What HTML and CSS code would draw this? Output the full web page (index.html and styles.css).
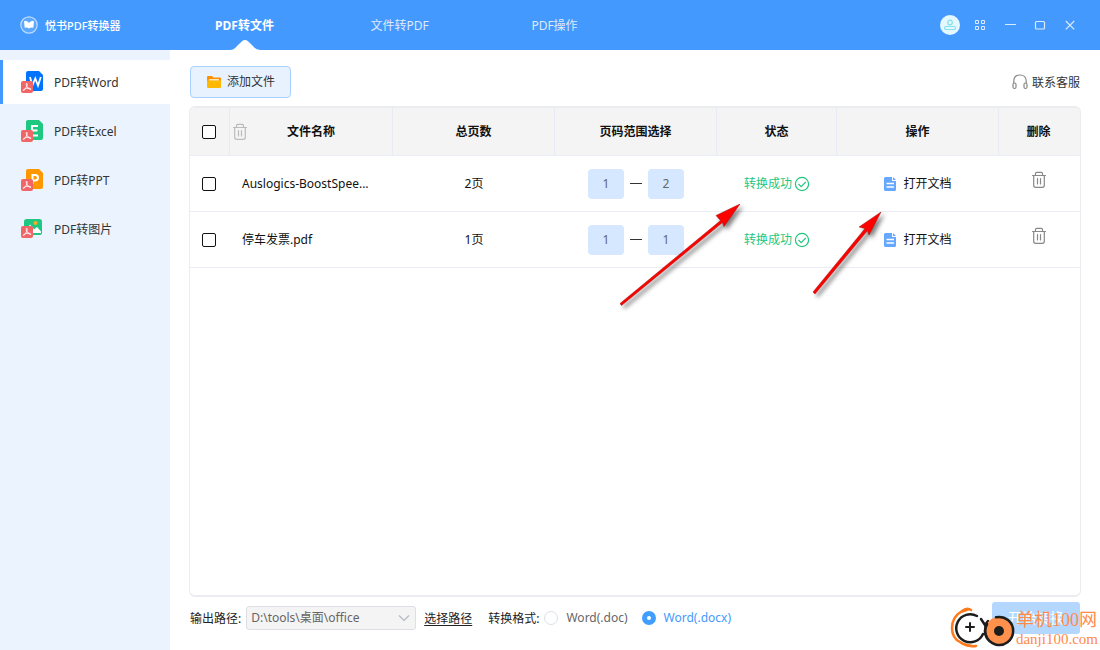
FILE: index.html
```html
<!DOCTYPE html>
<html lang="zh-CN">
<head>
<meta charset="utf-8">
<title>悦书PDF转换器</title>
<link rel="stylesheet" href="styles.css">
</head>
<body>
<svg class="defs" aria-hidden="true">
  <symbol id="badge" viewBox="0 0 12 12">
    <rect width="12" height="12" rx="2" fill="#f06565"/>
    <path d="M5.600 2.200C7 2.500 5.800 5.500 4.500 7.600C3.600 9 2.200 10 2.100 9.200C2.200 8.300 5 7.300 7.200 7.200C9 7.100 10.300 7.800 9.800 8.400C9 8.900 7 7.500 6 5.500C5.200 4 4.900 2.400 5.600 2.200Z" fill="none" stroke="#fff" stroke-width=".9"/>
  </symbol>
  <symbol id="trash" viewBox="0 0 16 18">
    <g fill="none" stroke="currentColor" stroke-width="1.2" stroke-linecap="round">
      <path d="M1.500 4.500h13M4.500 4V2.500Q4.500 1.300 5.700 1.300h4.600q1.200 0 1.200 1.200V4M2.700 4.800v9.500q0 2 2 2h6.600q2 0 2-2V4.800M6.500 7.500v5.500M9.500 7.500v5.500"/>
    </g>
  </symbol>
  <symbol id="check" viewBox="0 0 16 16">
    <g fill="none" stroke="#22c77e" stroke-width="1.200"><circle cx="8" cy="8" r="6.600"/><path d="M4.500 8l2.700 2.700 4.600-4.800"/></g>
  </symbol>
  <symbol id="doc" viewBox="0 0 12 14">
    <path d="M1.500 0H8v3.500q0 .5.500.5H12v8.500q0 1.500-1.500 1.500h-9Q0 14 0 12.500v-11Q0 0 1.500 0ZM9 0l3 3H9Z" fill="#64a9ff"/>
    <path d="M2.500 6.500h7.500M2.500 10h7.500" stroke="#fff" stroke-width="1.300"/>
  </symbol>
</svg>

<header class="topbar">
  <div class="brand">
    <svg class="brand-logo" viewBox="0 0 18 18"><circle cx="9" cy="9" r="8.200" fill="#5ca8ff" stroke="#bedcff" stroke-width="1.200"/><path d="M5.200 4.800Q8 5.300 9 7q1-1.700 3.800-2.200l1.200.7-.7 6.200Q10.500 11.300 9 12.500q-1.500-1.200-4.300-.8L4 5.500Z" fill="#fff"/></svg>
    <span>悦书PDF转换器</span>
  </div>
  <nav class="tabs">
    <a class="tab tab-active" href="#file">PDF转文件<svg class="tab-notch" viewBox="0 0 30 10"><path d="M0 10Q4 10 7 6L12 1.200Q15-1 18 1.200L23 6Q26 10 30 10Z" fill="#fff"/></svg></a>
    <a class="tab" href="#pdf">文件转PDF</a>
    <a class="tab" href="#ops">PDF操作</a>
  </nav>
  <div class="window-tools">
    <button class="tool avatar" aria-label="账户"><svg viewBox="0 0 20 20"><circle cx="10" cy="10" r="10" fill="#e4f8ff"/><g fill="none" stroke="#86e0e8" stroke-width="1.200"><circle cx="10" cy="7.500" r="2.300"/><rect x="4.500" y="11.500" width="11" height="3" rx="1.500"/></g></svg></button>
    <button class="tool" aria-label="菜单"><svg viewBox="0 0 20 20"><path d="M5.500 5.500h3v3h-3zM11.500 5.500h3v3h-3zM5.500 11.500h3v3h-3zM11.500 11.500h3v3h-3z" fill="none" stroke="#d9eaff"/></svg></button>
    <button class="tool" aria-label="最小化"><svg viewBox="0 0 20 20"><path d="M5 9.500h11" stroke="#d9eaff"/></svg></button>
    <button class="tool" aria-label="最大化"><svg viewBox="0 0 20 20"><rect x="5.500" y="6.500" width="9" height="7.500" rx="1" fill="none" stroke="#d9eaff" stroke-width="1.200"/></svg></button>
    <button class="tool" aria-label="关闭"><svg viewBox="0 0 20 20"><path d="M5.800 6l8.400 8.400M14.200 6l-8.400 8.400" stroke="#d9eaff" stroke-width="1.200"/></svg></button>
  </div>
</header>

<div class="body">
  <nav class="sidebar">
    <a class="side-item side-active" href="#word"><svg class="side-icon" viewBox="0 0 22 22"><path d="M7 0h11l4 4v14q0 2-2 2H7q-2 0-2-2V2q0-2 2-2Z" fill="#0073ff"/><path d="M9 6l2.300 8.500L14.300 7.500l2.700 7L19.800 6" fill="none" stroke="#fff" stroke-width="1.800"/><use href="#badge" y="10" width="12" height="12"/></svg><span>PDF转Word</span></a>
    <a class="side-item" href="#excel"><svg class="side-icon" viewBox="0 0 22 22"><path d="M7 0h11l4 4v14q0 2-2 2H7q-2 0-2-2V2q0-2 2-2Z" fill="#1fc881"/><path d="M17 6h-6v9.500h6M11 10.500h5.500" fill="none" stroke="#fff" stroke-width="2"/><use href="#badge" y="10" width="12" height="12"/></svg><span>PDF转Excel</span></a>
    <a class="side-item" href="#ppt"><svg class="side-icon" viewBox="0 0 22 22"><path d="M7 0h11l4 4v14q0 2-2 2H7q-2 0-2-2V2q0-2 2-2Z" fill="#ff9800"/><path d="M11.500 15V6H14q3 0 3 2.700t-3 2.700h-2" fill="none" stroke="#fff" stroke-width="2"/><use href="#badge" y="10" width="12" height="12"/></svg><span>PDF转PPT</span></a>
    <a class="side-item" href="#image"><svg class="side-icon" viewBox="0 0 22 22"><rect x="3" y="1" width="18" height="16" rx="2.500" fill="#1fc881"/><circle cx="14.500" cy="5" r="2" fill="#ffa726"/><path d="M4.500 12L9 6.500l4 5 3-2.500 4 4.500V15H4.500Z" fill="#fff"/><use href="#badge" y="8" width="12" height="12"/></svg><span>PDF转图片</span></a>
  </nav>

  <main class="main">
    <div class="toolbar">
      <button class="add-btn"><svg class="folder" viewBox="0 0 16 14"><path d="M1 3V2q0-1 1-1h4l1.500 1.500H14q1 0 1 1V6H1Z" fill="#ff9100"/><path d="M3 4h10v3H3Z" fill="#ffe6b0"/><path d="M1 5.500h14V12q0 1-1 1H2q-1 0-1-1Z" fill="#ffb800"/></svg>添加文件</button>
      <a class="service" href="#service"><svg class="headset" viewBox="0 0 16 16"><g fill="none" stroke="#888" stroke-width="1.200"><path d="M1.800 9V7Q2 1 8 1t6.200 6v2"/><rect x="1" y="9" width="3" height="5.500" rx="1.500"/><rect x="12" y="9" width="3" height="5.500" rx="1.500"/></g></svg><span>联系客服</span></a>
    </div>

    <section class="panel">
      <table class="files">
        <colgroup><col class="col-check"><col class="col-name"><col><col><col class="col-status"><col><col class="col-delete"></colgroup>
        <thead>
          <tr>
            <th><input class="check" type="checkbox" aria-label="全选"></th>
            <th class="name-head"><div class="name-grid"><button class="trash-btn muted" aria-label="清空"><svg class="trash"><use href="#trash"/></svg></button><span>文件名称</span></div></th>
            <th>总页数</th><th>页码范围选择</th><th>状态</th><th>操作</th><th>删除</th>
          </tr>
        </thead>
        <tbody>
          <tr>
            <td><input class="check" type="checkbox" aria-label="选择 Auslogics-BoostSpee..."></td>
            <td class="name">Auslogics-BoostSpee...</td>
            <td>2页</td>
            <td><div class="range"><input class="page" type="text" value="1" aria-label="起始页"><span class="dash"></span><input class="page" type="text" value="2" aria-label="结束页"></div></td>
            <td><div class="status">转换成功<svg class="ok"><use href="#check"/></svg></div></td>
            <td><button class="open"><svg class="doc"><use href="#doc"/></svg>打开文档</button></td>
            <td class="delete"><button class="trash-btn" aria-label="删除"><svg class="trash"><use href="#trash"/></svg></button></td>
          </tr>
          <tr>
            <td><input class="check" type="checkbox" aria-label="选择 停车发票.pdf"></td>
            <td class="name">停车发票.pdf</td>
            <td>1页</td>
            <td><div class="range"><input class="page" type="text" value="1" aria-label="起始页"><span class="dash"></span><input class="page" type="text" value="1" aria-label="结束页"></div></td>
            <td><div class="status">转换成功<svg class="ok"><use href="#check"/></svg></div></td>
            <td><button class="open"><svg class="doc"><use href="#doc"/></svg>打开文档</button></td>
            <td class="delete"><button class="trash-btn" aria-label="删除"><svg class="trash"><use href="#trash"/></svg></button></td>
          </tr>
        </tbody>
      </table>
    </section>

    <footer class="footer">
      <label class="path-label" for="path">输出路径:</label>
      <div class="select-wrap">
        <select id="path" class="path" disabled><option>D:\tools\桌面\office</option></select>
        <svg class="chevron" viewBox="0 0 12 8"><path d="M1 1.500l5 5 5-5" fill="none" stroke="#b4b8c0" stroke-width="1.200"/></svg>
      </div>
      <a class="choose" href="#choose">选择路径</a>
      <span class="format-label">转换格式:</span>
      <label class="format"><input class="radio" type="radio" name="format">Word(.doc)</label>
      <label class="format format-on"><input class="radio" type="radio" name="format" checked>Word(.docx)</label>
      <button class="start" disabled>开始转换</button>
    </footer>
  </main>
</div>

<svg class="arrows" viewBox="0 0 270 110" aria-hidden="true">
  <g fill="#f00" stroke="#9c1010" stroke-width=".5">
    <path d="M0 99.500L100.500 16.500 96 11.500 120 0 104 22.500 102.500 18.500 1.500 101.500Z"/>
    <path d="M193 88L245 24.500 239 23 261 8 249 31 247.500 26.500 195 90Z"/>
  </g>
</svg>

<div class="watermark">
  <svg class="mark-logo" viewBox="0 0 66 44">
    <g fill="none" stroke-linecap="round">
      <path d="M21 4Q17 1 12 5Q2 11 2 22q0 10 8 14 7 5 16 4" stroke="#ff7a1a" stroke-width="2.500"/>
      <path d="M12 5Q17 0 20 4L12 7ZM10 36q8 8 17 4L14 37Z" fill="#ff7a1a"/>
      <circle cx="20" cy="22" r="14" fill="#fff"/>
      <path d="M27 10A14 14 0 1 0 33 28M31 13l4 6 3-4" stroke="#1d1d1d" stroke-width="2.500"/>
      <circle cx="49" cy="25" r="14" fill="#ff914d"/>
      <path d="M46 11.300A14 14 0 1 1 37 18" stroke="#1d1d1d" stroke-width="2.500"/>
      <path d="M37 18A14 14 0 0 0 37 32" stroke="#1d1d1d" stroke-width="2.500"/>
      <path d="M16 21h8M20 17v8" stroke="#1d1d1d" stroke-width="2"/>
    </g>
    <circle cx="49" cy="25" r="5" fill="#1d1d1d"/>
  </svg>
  <div class="mark-text"><span class="mark-name">单机100网</span><span class="mark-url">danji100.com</span></div>
</div>
</body>
</html>
```
FILE: styles.css
```css
* { box-sizing: border-box; }
body {
  margin: 0;
  min-height: 100vh;
  display: flex;
  flex-direction: column;
  position: relative;
  overflow: hidden;
  background: #fff;
  color: #222;
  font: 12px/16px "Noto Sans", "Noto Sans CJK SC", sans-serif;
}
a { color: inherit; text-decoration: none; }
button, input, select { font: inherit; color: inherit; margin: 0; }
button { border: 0; padding: 0; background: none; }
svg { display: block; flex: none; }
.defs { position: absolute; width: 0; height: 0; }

.topbar { display: flex; height: 50px; background: #4499ff; color: #fff; }
.brand { width: 167px; padding-left: 20px; display: flex; align-items: center; gap: 7px; font-size: 11px; font-weight: 500; }
.brand span { padding-top: 2px; }
.brand-logo { width: 18px; height: 18px; }
.tabs { display: flex; flex: 1; }
.tab { width: 155px; padding-top: 2px; display: flex; align-items: center; justify-content: center; position: relative; color: #dfeaf8; }
.tab-active { color: #fff; font-weight: 700; }
.tab-notch { position: absolute; bottom: 0; left: 50%; margin-left: -15px; width: 30px; height: 10px; }
.window-tools { display: flex; align-items: center; gap: 10px; padding-right: 20px; }
.tool, .tool svg { width: 20px; height: 20px; }

.body { flex: 1; display: flex; }
.sidebar { width: 170px; flex: none; background: #ebf3ff; padding-top: 10px; display: flex; flex-direction: column; gap: 5px; }
.side-item { height: 44px; display: flex; align-items: center; gap: 11px; padding-left: 18px; border-left: 3px solid transparent; color: #333; }
.side-item span { padding-top: 2px; }
.side-active { background: #fff; border-left-color: #4499ff; }
.side-icon { width: 22px; height: 22px; }

.main { flex: 1; min-width: 0; display: flex; flex-direction: column; padding: 16px 19px; }
.toolbar { display: flex; align-items: center; justify-content: space-between; padding: 0 1px; margin-bottom: 8px; }
.add-btn { height: 32px; padding: 0 15px; display: flex; align-items: center; gap: 5px; border: 1px solid #a9d0ff; border-radius: 4px; background: #e8f2ff; color: #333; }
.folder { width: 16px; height: 14px; }
.service { display: flex; align-items: center; gap: 4px; color: #333; }
.service span { padding-top: 2px; }
.headset { width: 16px; height: 16px; }

.panel { flex: 1; border: 1px solid #ebecf0; border-width: 2px 1px; border-radius: 6px; overflow: hidden; }
.files { width: 100%; table-layout: fixed; border-collapse: separate; border-spacing: 0; color: #111; }
.col-check { width: 40px; }
.col-name { width: 163px; }
.col-status { width: 120px; }
.col-delete { width: 81px; }
.files th, .files td { padding: 0; text-align: center; vertical-align: middle; border-bottom: 1px solid #ebedf5; }
.files th { height: 48px; background: #f4f4f4; border-right: 1px solid #e8ebf5; font-weight: 700; }
.files th:last-child { border-right: 0; }
.files td { height: 56px; }
.files th:last-child, .files td:last-child { padding-right: 2px; }
.files .name { text-align: left; padding-left: 12px; }
.name-grid { display: grid; grid-template-columns: 20px 1fr 20px; align-items: center; }
.check { appearance: none; display: block; width: 14px; height: 14px; margin: 0 0 0 12px; border: 1px solid #111; border-radius: 2px; background: #fff; }
.check:checked { background: #4499ff; }
.trash-btn { display: inline-block; color: #888; vertical-align: middle; }
.muted { color: #bbb; }
.trash { width: 16px; height: 18px; margin: 0 auto; }
.files .delete { padding-bottom: 8px; }
.range { display: flex; justify-content: center; align-items: center; gap: 6px; }
.page { width: 36px; height: 30px; border: 0; border-radius: 4px; background: #d6e8ff; color: #666; text-align: center; padding: 0; }
.dash { width: 12px; height: 1px; background: #333; }
.status { display: flex; align-items: center; justify-content: center; gap: 2px; color: #22c77e; }
.ok { width: 16px; height: 16px; }
.open { display: flex; align-items: center; gap: 7px; margin: 0 auto; }
.doc { width: 12px; height: 14px; }

.footer { display: flex; align-items: center; height: 32px; margin-top: 5px; padding: 0 1px; }
.path-label, .choose, .format-label { padding-top: 2px; }
.path-label { margin-right: 5px; }
.select-wrap { width: 170px; position: relative; }
.path { appearance: none; display: block; width: 100%; height: 24px; padding: 0 4px; border: 1px solid #dcdfe6; border-radius: 3px; background: #f4f4f4; color: #666; opacity: 1; }
.chevron { position: absolute; right: 6px; top: 8px; width: 12px; height: 8px; }
.choose { margin-left: 8px; text-decoration: underline; text-underline-offset: 2px; }
.format-label { margin-left: 16px; margin-right: 5px; }
.format { display: flex; align-items: center; gap: 8px; margin-right: 14px; color: #666; }
.format-on { color: #4499ff; }
.radio { appearance: none; width: 14px; height: 14px; border: 1px solid #dcdfe6; border-radius: 50%; background: #fff; }
.radio:checked { border: 5px solid #409eff; }
.start { margin-left: auto; width: 88px; height: 32px; border-radius: 3px; background: #b4d7ff; color: #fff; font-size: 14px; }

.arrows { position: absolute; left: 620px; top: 204px; width: 270px; height: 110px; pointer-events: none; filter: drop-shadow(3px 3px 2px rgba(0, 0, 0, .5)); }
.watermark { position: absolute; right: 2px; bottom: 0; display: flex; align-items: center; pointer-events: none; color: #ff8a4a; }
.mark-logo { width: 66px; height: 44px; }
.mark-text { display: flex; flex-direction: column; padding-top: 2px; }
.mark-name { font: 18px/20px "Liberation Serif", "Noto Sans CJK SC", serif; }
.mark-url { font: 15px/18px "Liberation Serif", serif; }
```
